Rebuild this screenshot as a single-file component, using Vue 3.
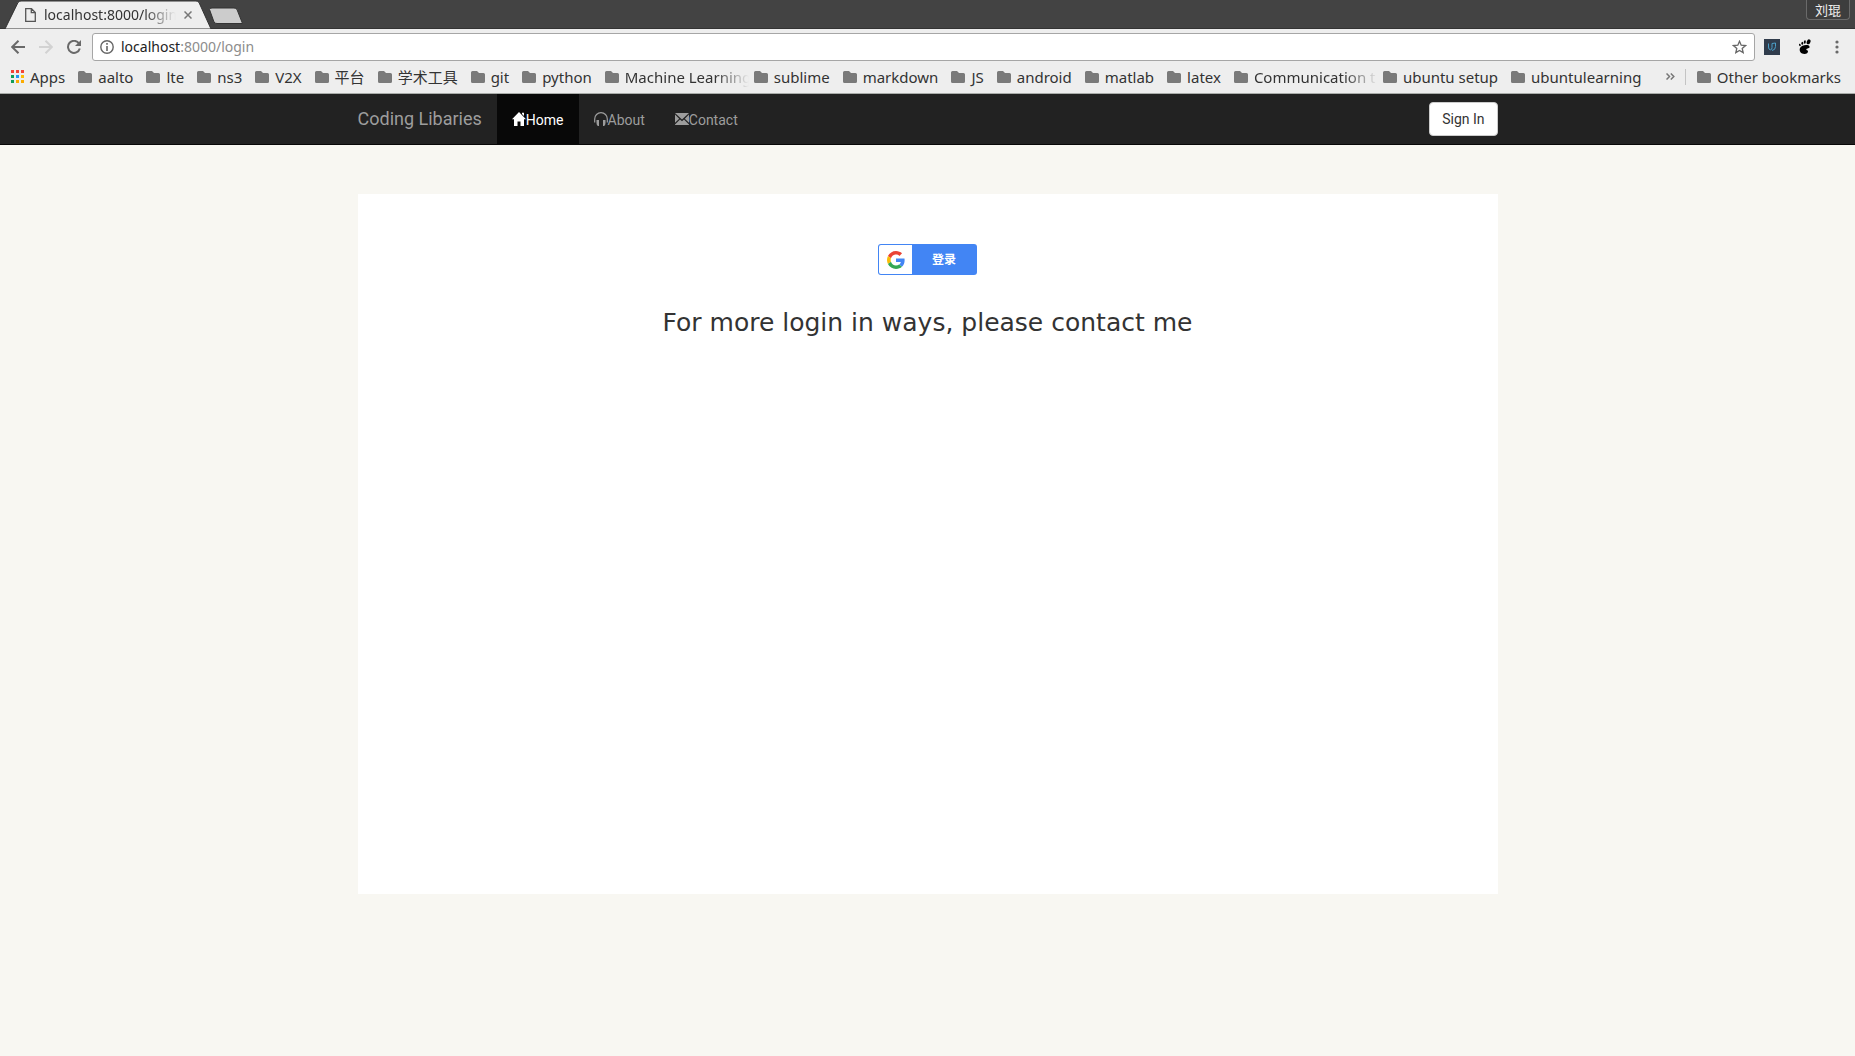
<script setup>
const bookmarks = [
  { name: 'aalto' },
  { name: 'lte' },
  { name: 'ns3' },
  { name: 'V2X' },
  { name: '平台' },
  { name: '学术工具' },
  { name: 'git' },
  { name: 'python' },
  { name: 'Machine Learning', clipped: true },
  { name: 'sublime' },
  { name: 'markdown' },
  { name: 'JS' },
  { name: 'android' },
  { name: 'matlab' },
  { name: 'latex' },
  { name: 'Communication t', clipped: true },
  { name: 'ubuntu setup' },
  { name: 'ubuntulearning' },
]
const folder = 'M0 1.5Q0 0 1.5 0H6L8 2H12.500Q14 2 14 3.500V10.500Q14 12 12.500 12H1.500Q0 12 0 10.500Z'
const dots = ['#f44336', '#f44336', '#f44336', '#0f9d58', '#2196f3', '#fbbc05', '#0f9d58', '#fbab00', '#fbab00']
</script>

<template>
  <div class="window">
    <header class="chrome">
      <div class="tabstrip">
        <div class="tabs">
          <svg class="tab-shapes" width="244" height="28" viewBox="0 0 244 28" aria-hidden="true">
            <path d="M5 28.500L18 2Q19 .5 21 .5H196Q198 .5 199 2L211 28.500Z" fill="#eee" stroke="#333" />
            <path d="M212 7.500H234Q236 7.500 237 9L242.500 23H217Q215 23 214 21.500L209.500 9Q209 7.500 212 7.500Z" fill="#ccc" stroke="#333" />
          </svg>
          <div class="tab">
            <svg width="11" height="14" viewBox="0 0 11 14" fill="none" stroke="#555" stroke-width="1.300"><path d="M.7.700H6.500L10.300 4.500V13.300H.7ZM6.300.700V4.700H10.300" /></svg>
            <span class="tab-title">localhost:8000/login</span>
            <button class="plain" aria-label="Close tab">
              <svg width="8" height="8" viewBox="0 0 8 8" stroke="#777" stroke-width="1.500"><path d="M.5.5L7.500 7.500M7.500.5L.5 7.500" /></svg>
            </button>
          </div>
        </div>
        <button class="profile">刘琨</button>
      </div>

      <div class="toolbar">
        <div class="history">
          <button class="plain" aria-label="Back"><svg width="14" height="14" viewBox="0 0 14 14" fill="none" stroke="#696969" stroke-width="2"><path d="M14 7H1.500M7.500.700L1.200 7L7.500 13.300" /></svg></button>
          <button class="plain" aria-label="Forward"><svg width="14" height="14" viewBox="0 0 14 14" fill="none" stroke="#d2d2d2" stroke-width="2"><path d="M0 7H12.500M6.500.700L12.800 7L6.500 13.300" /></svg></button>
          <button class="plain" aria-label="Reload"><svg width="14" height="14" viewBox="0 0 14 14"><path d="M12 3.500A6 6 0 1 0 12.800 8.500" fill="none" stroke="#696969" stroke-width="2" /><path d="M14 0V6H8Z" fill="#696969" /></svg></button>
        </div>
        <div class="omnibox">
          <svg width="14" height="14" viewBox="0 0 14 14"><circle cx="7" cy="7" r="6.200" fill="none" stroke="#666" stroke-width="1.400" /><path d="M7 3V4.700M7 6V11" stroke="#666" stroke-width="1.600" /></svg>
          <a class="url" href="#"><b>localhost</b>:8000/login</a>
          <button class="plain" aria-label="Bookmark this page"><svg width="15" height="14" viewBox="0 0 15 14"><path d="M7.500 1.300L9.200 5.200L13.500 5.600L10.200 8.400L11.200 12.600L7.500 10.400L3.800 12.600L4.800 8.400L1.500 5.600L5.800 5.200Z" fill="none" stroke="#666" stroke-width="1.300" /></svg></button>
        </div>
        <div class="extensions">
          <button class="plain" aria-label="Udacity"><svg width="16" height="16" viewBox="0 0 16 16"><rect width="16" height="16" fill="#303c4c" /><path d="M4.500 4.500V8Q4.500 10.800 6.500 10.800Q8 10.800 8 8.500V4.500L11.500 4V7.500Q11.500 11 8 11.500" fill="none" stroke="#4b9fc8" stroke-width="1" /></svg></button>
          <button class="plain" aria-label="GNOME Shell integration"><svg width="14" height="16" viewBox="0 0 14 16"><ellipse cx="10.600" cy="2.800" rx="1.800" ry="2.600" transform="rotate(22 10.600 2.800)" /><ellipse cx="6.800" cy="3" rx="1" ry="1.700" transform="rotate(10 6.800 3)" /><ellipse cx="4.300" cy="4.200" rx=".9" ry="1.500" /><ellipse cx="1.900" cy="5.900" rx=".8" ry="1.300" transform="rotate(-20 1.900 5.900)" /><path d="M2 9C3.500 5.800 10.500 5 11.500 7.500C12.200 9.800 8.500 9.200 8.300 10.400C8.200 11.400 9.700 10.800 10 12C10.200 14 8.500 15 6.500 15C3 15 .8 12 2 9Z" /></svg></button>
          <button class="plain" aria-label="Menu"><svg width="14" height="14" viewBox="0 0 14 14" fill="#696969"><circle cx="7" cy="2" r="1.600" /><circle cx="7" cy="7" r="1.600" /><circle cx="7" cy="12" r="1.600" /></svg></button>
        </div>
      </div>

      <nav class="bookmarks" aria-label="Bookmarks">
        <a class="bookmark" href="#">
          <svg width="13" height="13" viewBox="0 0 13 13"><rect v-for="(c, i) in dots" :key="i" :x="(i % 3) * 5" :y="Math.floor(i / 3) * 5" width="3" height="3" :fill="c" /></svg>
          <span>Apps</span>
        </a>
        <a v-for="b in bookmarks" :key="b.name" class="bookmark" href="#">
          <svg width="14" height="12" viewBox="0 0 14 12"><path :d="folder" fill="#7a7a7a" /></svg>
          <span :class="{ clipped: b.clipped }">{{ b.name }}</span>
        </a>
        <div class="overflow">
          <button class="plain" aria-label="More bookmarks"><svg width="9" height="7" viewBox="0 0 9 7" fill="none" stroke="#777" stroke-width="1.500"><path d="M.5.5L3.500 3.500L.5 6.500M4.800.5L7.800 3.500L4.800 6.500" /></svg></button>
          <a class="bookmark other" href="#">
            <svg width="14" height="12" viewBox="0 0 14 12"><path :d="folder" fill="#7a7a7a" /></svg>
            <span>Other bookmarks</span>
          </a>
        </div>
      </nav>
    </header>

    <nav class="navbar">
      <div class="container">
        <a class="brand" href="#">Coding Libaries</a>
        <a class="link active" href="#">
          <svg width="14" height="14" viewBox="0 0 14 14" fill="currentColor"><path d="M7 0L14 7.300H12V14H8.500V9.500H5.500V14H2V7.300H0ZM10 .8H12V4L10 2Z" /></svg><span>Home</span>
        </a>
        <a class="link" href="#">
          <svg width="14" height="14" viewBox="0 0 14 14"><path d="M.7 10.500V7A6.300 6.300 0 0 1 13.300 7V10.500" fill="none" stroke="currentColor" stroke-width="1.200" /><path d="M2.500 8H5V14H3.800Q2.500 13 2.500 11ZM11.500 8H9V14H10.200Q11.500 13 11.500 11Z" fill="currentColor" /></svg><span>About</span>
        </a>
        <a class="link" href="#">
          <svg width="14" height="14" viewBox="0 0 14 14" fill="currentColor"><path d="M0 1H14L7 7.500ZM0 2.500L4.200 6.700L0 10.800ZM14 2.500V10.800L9.800 6.700ZM5 7.500L7 9.300L9 7.500L14 12.500V13H0V12.500Z" /></svg><span>Contact</span>
        </a>
        <button class="sign-in">Sign In</button>
      </div>
    </nav>

    <main class="container panel">
      <button class="google">
        <span class="logo"><svg width="18" height="18" viewBox="0 0 48 48"><path fill="#ea4335" d="M24 9.500c3.540 0 6.710 1.220 9.210 3.600l6.850-6.850C35.900 2.380 30.470 0 24 0 14.620 0 6.510 5.380 2.560 13.220l7.980 6.190C12.430 13.720 17.740 9.500 24 9.500z" /><path fill="#4285f4" d="M46.980 24.550c0-1.570-.15-3.090-.38-4.550H24v9.020h12.940c-.58 2.960-2.260 5.480-4.780 7.180l7.730 6c4.510-4.180 7.090-10.360 7.090-17.650z" /><path fill="#fbbc05" d="M10.530 28.590c-.48-1.450-.76-2.990-.76-4.590s.27-3.140.76-4.590l-7.980-6.190C.92 16.460 0 20.120 0 24c0 3.880.92 7.540 2.560 10.780l7.970-6.190z" /><path fill="#34a853" d="M24 48c6.480 0 11.930-2.130 15.890-5.810l-7.730-6c-2.150 1.450-4.920 2.300-8.160 2.300-6.260 0-11.570-4.220-13.470-9.910l-7.980 6.190C6.510 42.620 14.620 48 24 48z" /></svg></span>
        <span class="google-label">登录</span>
      </button>
      <h1>For more login in ways, please contact me</h1>
    </main>
  </div>
</template>

<style>
body {
  margin: 0;
  background: #f8f7f2;
}
</style>

<style scoped>
.window {
  color: #333;
  font-family: Roboto, "Noto Sans CJK SC", sans-serif;
}
svg {
  display: block;
  flex: none;
}
a {
  color: inherit;
  text-decoration: none;
}
button {
  box-sizing: border-box;
  font: inherit;
  cursor: pointer;
}
.plain {
  padding: 0;
  border: 0;
  background: none;
}
.chrome {
  background: #eee;
  border-bottom: 1px solid #a9aca9;
  font: 14px/20px "Noto Sans", "Noto Sans CJK SC", sans-serif;
}
.tabstrip {
  display: flex;
  justify-content: space-between;
  align-items: flex-start;
  height: 28px;
  background: #434343;
  border-bottom: 1px solid #333;
}
.tabs {
  position: relative;
  width: 244px;
  height: 29px;
}
.tab-shapes {
  position: absolute;
  inset: 0;
  height: 29px;
}
.tab {
  position: relative;
  display: flex;
  align-items: center;
  height: 30px;
  padding-left: 25px;
}
.tab-title {
  width: 132px;
  margin: 0 8px;
  overflow: hidden;
  white-space: nowrap;
  mask-image: linear-gradient(to right, #000 100px, transparent 132px);
}
.profile {
  height: 20px;
  margin-right: 5px;
  padding: 0 8px;
  border: 1px solid #6a6a6a;
  border-top: 0;
  border-radius: 0 0 4px 4px;
  background: #3d3d3d;
  color: #eee;
  font-size: 13px;
  line-height: 20px;
}
.toolbar {
  display: flex;
  align-items: center;
  height: 36px;
  padding-right: 11px;
}
.history {
  display: flex;
  gap: 14px;
  padding: 0 11px;
}
.omnibox {
  display: flex;
  flex: 1;
  align-items: center;
  gap: 7px;
  height: 26px;
  padding: 0 7px;
  border: 1px solid #a6a6a6;
  border-radius: 3px;
  background: #fff;
}
.url {
  flex: 1;
  color: #8c8c8c;
}
.url b {
  color: #222;
  font-weight: 400;
}
.extensions {
  display: flex;
  align-items: center;
  gap: 18px;
  margin-left: 9px;
}
.bookmarks {
  display: flex;
  align-items: center;
  gap: 13px;
  height: 23px;
  padding: 0 14px 5px 11px;
  font-size: 15px;
  white-space: nowrap;
}
.bookmark {
  display: flex;
  align-items: center;
  gap: 6px;
}
.clipped {
  width: 124px;
  margin-right: -8px;
  overflow: hidden;
  mask-image: linear-gradient(to right, #000 90px, transparent 124px);
}
.overflow {
  display: flex;
  align-items: center;
  gap: 10px;
  margin-left: auto;
}
.other {
  padding-left: 11px;
  border-left: 1px solid #c4c4c4;
  line-height: 16px;
}
.container {
  box-sizing: border-box;
  width: 1140px;
  max-width: 100%;
  margin: 0 auto;
}
.navbar {
  background: #222;
  border-bottom: 1px solid #080808;
}
.navbar .container {
  display: flex;
  align-items: center;
}
.brand {
  margin-right: 15px;
  color: #9d9d9d;
  font-size: 18px;
  line-height: 50px;
}
.link {
  display: flex;
  align-items: center;
  height: 50px;
  padding: 0 15px;
  color: #9d9d9d;
  font: 14px/20px Roboto, sans-serif;
}
.link span {
  padding-top: 2px;
}
.active {
  background: #080808;
  color: #fff;
}
.sign-in {
  height: 34px;
  margin-left: auto;
  padding: 0 12px;
  border: 1px solid #ccc;
  border-radius: 4px;
  background: #fff;
  color: #333;
  font-size: 14px;
}
.panel {
  display: flex;
  flex-direction: column;
  align-items: center;
  min-height: 700px;
  margin-top: 49px;
  padding-top: 50px;
  background: #fff;
}
.google {
  display: flex;
  width: 99px;
  height: 31px;
  padding: 1px;
  border: 0;
  border-radius: 3px;
  background: #4285f4;
  color: #fff;
}
.logo {
  display: grid;
  place-items: center;
  width: 33px;
  height: 29px;
  border-radius: 2px 0 0 2px;
  background: #fff;
}
.google-label {
  flex: 1;
  font: bold 12px/27px "Noto Sans CJK SC", sans-serif;
}
h1 {
  margin: 32px 0 0;
  font: 25px/32px "DejaVu Sans", sans-serif;
}
</style>
